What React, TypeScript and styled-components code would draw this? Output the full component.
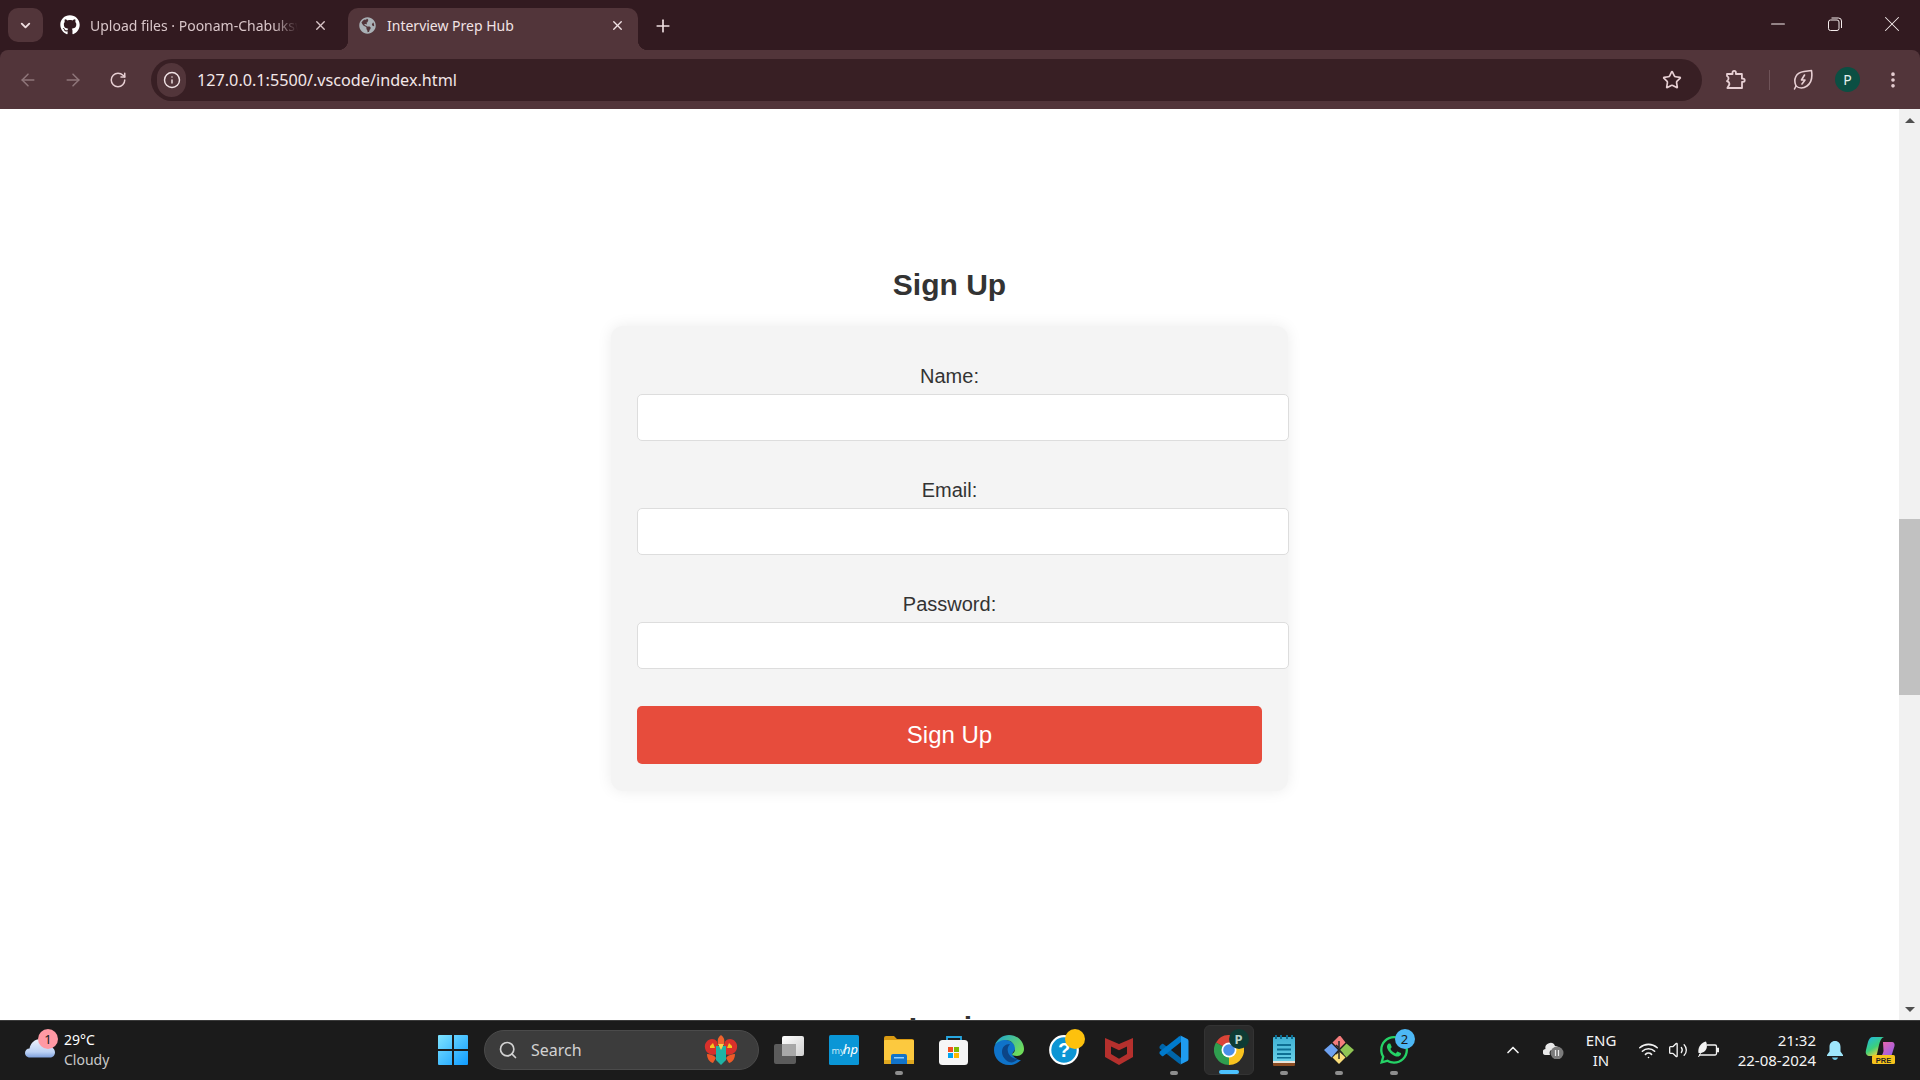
import React from "react";
import styled, { createGlobalStyle } from "styled-components";
import { ArrowLeft, ArrowRight, RotateCw, Info, Star, X, Plus, ChevronDown, ChevronUp, EllipsisVertical, Search, Wifi, Volume2, Minus } from "lucide-react";
import { FaGithub, FaGlobeAmericas, FaWhatsapp } from "react-icons/fa";

const Global = createGlobalStyle`
  html, body { margin: 0; padding: 0; height: 100%; overflow: hidden; background: #fff; }
`;

const Desktop = styled.div`
  width: 1920px; height: 1080px; display: flex; flex-direction: column; overflow: hidden;
  font-family: "Noto Sans", "Open Sans", sans-serif;
`;

/* ---------- browser chrome ---------- */
const TabStrip = styled.div`
  height: 50px; flex: none; background: #321a20; display: flex; align-items: flex-end; padding-left: 8px;
`;
const TabSearch = styled.button`
  width: 35px; height: 34px; margin-bottom: 8px; border: 0; padding: 0; border-radius: 10px; background: #52353a; color: #f0dfe1;
  display: flex; align-items: center; justify-content: center; flex: none;
`;
const Tab = styled.div<{ $active?: boolean }>`
  position: relative; height: 42px; flex: none; display: flex; align-items: center; box-sizing: border-box;
  width: 290px; padding-bottom: 8px;
  margin-left: ${p => (p.$active ? "8px" : "7px")};
  padding-left: ${p => (p.$active ? "11px" : "10px")};
  border-radius: 10px 10px 0 0;
  background: ${p => (p.$active ? "#52353a" : "transparent")};
  color: ${p => (p.$active ? "#f1e3e5" : "#d9c6c9")};
  ${p => p.$active && `
    &::before, &::after { content: ""; position: absolute; bottom: 0; width: 10px; height: 10px; }
    &::before { left: -10px; background: radial-gradient(circle at 0 0, transparent 10px, #52353a 10.5px); }
    &::after { right: -10px; background: radial-gradient(circle at 100% 0, transparent 10px, #52353a 10.5px); }
  `}
`;
const TabTitle = styled.span<{ $fade?: boolean }>`
  width: ${p => (p.$fade ? "208px" : "220px")}; margin-left: ${p => (p.$fade ? "10px" : "11px")}; font-size: 14px; white-space: nowrap; overflow: hidden;
  ${p => p.$fade && `-webkit-mask-image: linear-gradient(90deg, #000 88%, transparent 100%); mask-image: linear-gradient(90deg, #000 88%, transparent 100%);`}
`;
const TabClose = styled.span<{ $active?: boolean }>`
  margin-left: auto; margin-right: ${p => (p.$active ? "13px" : "12px")}; width: 16px; height: 16px; display: flex; align-items: center; justify-content: center;
`;
const NewTab = styled.span`
  margin: 0 0 14px 15px; width: 20px; height: 20px; color: #f0dfe1; display: flex; align-items: center; justify-content: center; align-self: flex-end;
`;
const WindowControls = styled.div`
  margin-left: auto; display: flex; align-self: flex-start;
`;
const WindowButton = styled.div`
  width: 57px; height: 48px; display: flex; align-items: center; justify-content: center; color: #f5ecec;
`;

const ToolWrap = styled.div`
  background: #321a20; flex: none;
`;
const Toolbar = styled.div`
  height: 59px; background: #52353a; border-radius: 8px 8px 0 0; display: flex; align-items: center; padding: 0 5px;
`;
const ToolButton = styled.div<{ $dim?: boolean }>`
  width: 45px; height: 42px; flex: none; display: flex; align-items: center; justify-content: center;
  color: ${p => (p.$dim ? "#8f767a" : "#e7cfd3")};
`;
const Omnibox = styled.div`
  flex: 1; height: 42px; margin: 0 11px; border-radius: 21px; background: #381f24; display: flex; align-items: center; padding: 0 5px 0 6px;
`;
const SiteChip = styled.div`
  width: 29px; height: 34px; border-radius: 17px; background: #52353a; color: #f1e3e5; display: flex; align-items: center; justify-content: center; flex: none;
`;
const UrlText = styled.span`
  margin-left: 11px; color: #f3e7e8; font-size: 16.2px; white-space: nowrap;
`;
const StarBox = styled.div`
  margin-left: auto; margin-right: 15px; color: #e7cfd3; display: flex;
`;
const Divider = styled.div`
  width: 1px; height: 20px; margin: 0 10px 0 11px; background: #6f5358; flex: none;
`;
const Avatar = styled.div`
  width: 25px; height: 25px; border-radius: 50%; background: #0b4f43; color: #e5f1ee; font-size: 14px; display: flex; align-items: center; justify-content: center;
`;

/* ---------- page ---------- */
const Viewport = styled.div`
  flex: 1; min-height: 0; display: flex; background: #fff; overflow: hidden;
`;
const Page = styled.main`
  flex: 1; min-width: 0; padding-top: 159px; display: flex; flex-direction: column; align-items: center;
  font-family: "Liberation Sans", Arial, sans-serif; color: #333;
`;
const Heading = styled.h2`
  margin: 0 0 24px; font-size: 30px; line-height: 34px; font-weight: 700; color: #333; text-align: center;
`;
const Card = styled.form`
  width: 625px; padding: 38px 26px 27px; background: #f4f4f4; border-radius: 12px; box-shadow: 0 0 15px rgba(0, 0, 0, 0.08);
  display: flex; flex-direction: column; gap: 37px;
`;
const Field = styled.div`
  display: flex; flex-direction: column; gap: 7px;
`;
const Label = styled.label`
  font-size: 20px; line-height: 22px; padding-top: 1px; text-align: center; color: #333;
`;
const Input = styled.input`
  display: block; box-sizing: content-box; width: 100%; height: 21px; padding: 12px 13px 12px 12px; border: 1px solid #ddd; border-radius: 5px; background: #fff; margin: 0;
  flex: none; outline: none;
`;
const Submit = styled.button`
  height: 58px; border: 0; padding: 0; border-radius: 5px; background: #e74c3c; color: #fff; font: 24px "Liberation Sans", Arial, sans-serif;
`;
const NextHeading = styled(Heading)`
  margin-top: 220px;
`;

const Scrollbar = styled.div`
  width: 21px; flex: none; background: #f1f1f1; display: flex; flex-direction: column; align-items: center;
`;
const ScrollArrow = styled.div<{ $down?: boolean }>`
  width: 0; height: 0; border-left: 5px solid transparent; border-right: 5px solid transparent;
  ${p => (p.$down ? "border-top: 5px solid #505050; margin-top: auto; margin-bottom: 8px;" : "border-bottom: 5px solid #505050; margin-top: 9px;")}
`;
const ScrollThumb = styled.div`
  width: 21px; height: 176px; margin-top: 396px; background: #c1c1c1;
`;

/* ---------- taskbar ---------- */
const Taskbar = styled.footer`
  height: 60px; flex: none; box-sizing: border-box; background: #1b1b1b; border-top: 1px solid #3b3b3b; padding-bottom: 1px; display: flex; align-items: center; color: #fff;
  position: relative; z-index: 2;
`;
const Weather = styled.div`
  width: 425px; flex: none; display: flex; align-items: center; padding-left: 25px; box-sizing: border-box;
`;
const WeatherIcon = styled.div`
  position: relative; width: 30px; height: 40px; display: flex; align-items: flex-end; padding-bottom: 12px; box-sizing: border-box;
`;
const Badge = styled.span<{ $bg: string; $size?: number; $top: number; $right: number }>`
  position: absolute; top: ${p => p.$top}px; right: ${p => p.$right}px; width: ${p => p.$size ?? 20}px; height: ${p => p.$size ?? 20}px; border-radius: 50%;
  background: ${p => p.$bg}; color: #1b1b1b; font-size: 13px; display: flex; align-items: center; justify-content: center;
`;
const WeatherText = styled.div`
  margin-left: 9px; font-size: 14px; line-height: 20px; margin-top: -1px;
`;
const WeatherSub = styled.div`
  color: #c9c9c9;
`;
const TaskSlot = styled.div`
  width: 55px; height: 58px; flex: none; display: flex; align-items: center; justify-content: center;
`;
const Tile = styled.div<{ $active?: boolean }>`
  position: relative; width: 50px; height: 50px; box-sizing: border-box; border-radius: 6px; display: flex; align-items: center; justify-content: center;
  background: ${p => (p.$active ? "#2b2b2b" : "transparent")};
  ${p => p.$active && "border: 1px solid #333;"}
`;
const Indicator = styled.span<{ $active?: boolean }>`
  position: absolute; left: 50%; bottom: 0; transform: translateX(-50%); height: 4px; border-radius: 2px;
  width: ${p => (p.$active ? "20px" : "8px")}; background: ${p => (p.$active ? "#4cc2ff" : "#8e8e8e")};
`;
const SearchPill = styled.div`
  width: 275px; height: 40px; flex: none; margin: 0 2px 0 4px; box-sizing: border-box; border-radius: 20px; background: #3c3c3c; border: 1px solid #4b4b4b;
  display: flex; align-items: center; padding: 0 19px 0 13px; color: #d2d2d2; font-size: 16px;
`;
const SearchWord = styled.span`
  margin-left: 13px;
`;
const Flower = styled.div`
  margin-left: auto; display: flex;
`;
const Tray = styled.div`
  margin-left: auto; padding-right: 14px; display: flex; align-items: center; height: 100%;
`;
const TrayItem = styled.div<{ $w: number }>`
  width: ${p => p.$w}px; flex: none; display: flex; align-items: center; justify-content: center;
`;
const Lang = styled(TrayItem)`
  flex-direction: column; font-size: 15px; line-height: 20px; color: #f4f4f4;
`;
const Clock = styled(TrayItem)`
  flex-direction: column; align-items: flex-end; font-size: 15px; line-height: 20px; color: #f4f4f4; white-space: nowrap;
`;

/* ---------- drawings ---------- */
const PuzzleIcon = () => (
  <svg width="21" height="21" viewBox="0 0 21 21" fill="none" stroke="currentColor" strokeWidth="1.8" strokeLinejoin="round">
    <path d="M2 5h5.500V3.600a1.700 1.700 0 0 1 3.400 0V5h6v4.600h1.200a1.600 1.600 0 0 1 0 3.200H17V19H2.400l1.800-3.200c.6-1.300-.2-3-1.600-3.300L2 12.200l1-1.200c1-1.400.5-3.300-1-4z" />
  </svg>
);
const LeafIcon = () => (
  <svg width="20" height="21" viewBox="0 0 20 21" fill="none" stroke="currentColor" strokeWidth="1.6" strokeLinecap="round" strokeLinejoin="round">
    <path d="M3 17C0 10 3 3.500 11 2.500L18.500 1.500C19.500 8 18.500 14 14 17 10.500 19.500 6 19.500 3 17z" />
    <path d="M1.500 20L3 17M11.500 6L8.500 11H12L9 15" />
  </svg>
);
const RestoreIcon = () => (
  <svg width="14" height="14" viewBox="0 0 14 14" fill="none" stroke="currentColor" strokeWidth="1">
    <rect x="0.500" y="3" width="10.500" height="10.500" rx="2" />
    <path d="M3.500 1h7a3 3 0 0 1 3 3v7" />
  </svg>
);
const CloudIcon = () => (
  <svg width="30" height="20" viewBox="0 0 30 20">
    <defs>
      <linearGradient id="cl" x1="0" y1="0" x2="0" y2="1"><stop offset="0" stopColor="#eef2fc" /><stop offset="0.7" stopColor="#bcd2f5" /><stop offset="1" stopColor="#7ea0dc" /></linearGradient>
    </defs>
    <path d="M5 19.500C1.500 19.500 0 17 0 15c0-2.500 2-4.500 4.500-4.500C5.500 5 10 1 15 1c4.500 0 8 3 9 7 3 .5 6 3 6 6.500 0 3-2.500 5-5 5z" fill="url(#cl)" />
  </svg>
);
const WindowsLogo = () => (
  <svg width="30" height="30" viewBox="0 0 30 30">
    <defs>
      <linearGradient id="win" x1="0" y1="0" x2="1" y2="1"><stop offset="0" stopColor="#7fe4ff" /><stop offset="1" stopColor="#0f9bff" /></linearGradient>
    </defs>
    <path d="M1 0h13v14H0V1a1 1 0 0 1 1-1zM16 0h13a1 1 0 0 1 1 1v13H16zM0 16h14v14H1a1 1 0 0 1-1-1zM16 16h14v13a1 1 0 0 1-1 1H16z" fill="url(#win)" />
  </svg>
);
const FlowerIcon = () => (
  <svg width="36" height="32" viewBox="0 0 36 32">
    <path d="M18 1c3 2 4 5 3 9h-6c-1-4 0-7 3-9z" fill="#f0622c" />
    <path d="M9 5c4 0 6 3 6 7v8c-6 2-12 0-13-6C1 9 5 5 9 5zM27 5c-4 0-6 3-6 7v8c6 2 12 0 13-6 1-5-3-9-7-9z" fill="#d9302b" />
    <path d="M7 12l3-3 2 5H7zM29 12l-3-3-2 5h5z" fill="#f7c51e" />
    <path d="M13 12h10v14l-5 5-5-5z" fill="#1fb4a5" />
    <path d="M15 10h6l-3 6z" fill="#f8d24a" />
    <path d="M4 20c3 0 7 1 9 4l-3 5c-4-1-6-5-6-9zM32 20c-3 0-7 1-9 4l3 5c4-1 6-5 6-9z" fill="#ee5a28" />
  </svg>
);
const TaskViewIcon = () => (
  <svg width="30" height="28" viewBox="0 0 30 28">
    <defs>
      <linearGradient id="tv" x1="0" y1="0" x2="1" y2="1"><stop offset="0" stopColor="#ffffff" /><stop offset="1" stopColor="#cfcfcf" /></linearGradient>
    </defs>
    <rect x="0" y="8" width="22" height="20" rx="2" fill="#5b5b5b" />
    <rect x="8" y="0" width="22" height="20" rx="2" fill="url(#tv)" />
    <rect x="8" y="8" width="14" height="12" fill="#a8a8a8" />
  </svg>
);
const MyHpIcon = () => (
  <svg width="30" height="30" viewBox="0 0 30 30">
    <rect width="30" height="30" rx="1.500" fill="#0a96d6" />
    <text x="2.500" y="19" fontFamily="Noto Sans, sans-serif" fontSize="9" fill="#cfeaf7">my</text>
    <text x="14" y="19" fontFamily="Noto Sans, sans-serif" fontStyle="italic" fontSize="13" fill="#ffffff">hp</text>
  </svg>
);
const FilesIcon = () => (
  <svg width="30" height="28" viewBox="0 0 30 28">
    <path d="M0 2a2 2 0 0 1 2-2h8l3 3h15a2 2 0 0 1 2 2v4H0z" fill="#d99a12" />
    <rect y="4" width="30" height="24" rx="1" fill="#fcc93f" />
    <path d="M0 24h30v3a1 1 0 0 1-1 1H1a1 1 0 0 1-1-1z" fill="#e0a81f" />
    <path d="M7 20a2 2 0 0 1 2-2h12a2 2 0 0 1 2 2v8H7z" fill="#1273c9" />
    <rect x="10" y="21" width="10" height="1.500" fill="#8fd0ff" />
  </svg>
);
const StoreIcon = () => (
  <svg width="30" height="30" viewBox="0 0 30 30">
    <path d="M8 6V2h14v4" fill="none" stroke="#27a7e0" strokeWidth="1.800" />
    <rect x="0" y="5" width="29" height="25" rx="3.500" fill="#f6f6f6" />
    <rect x="9" y="12" width="5" height="5" fill="#f25022" />
    <rect x="15" y="12" width="5" height="5" fill="#7fba00" />
    <rect x="9" y="18" width="5" height="5" fill="#00a4ef" />
    <rect x="15" y="18" width="5" height="5" fill="#ffb900" />
  </svg>
);
const EdgeIcon = () => (
  <svg width="30" height="30" viewBox="0 0 30 30">
    <defs>
      <linearGradient id="ed" x1="0" y1="0" x2="1" y2="0.600"><stop offset="0" stopColor="#1aa3d8" /><stop offset="1" stopColor="#6fdc5a" /></linearGradient>
    </defs>
    <path d="M0 15C0 7 6 4 12 5 16 5 20 8 22 13l-4 6c2 4 6 6 9 6-3 3-7 5-12 5C6 30 0 23 0 15z" fill="#0f73c9" />
    <path d="M8 17c0-5 3-8 8-8-2 2-3 5-2 8 1 4 5 7 10 7-3 3-6 4-9 3-4-2-7-6-7-10z" fill="#0c4587" />
    <path d="M1 10C3 4 9 0 15 0c9 0 15 7 15 14 0 4-3 7-7 7-3 0-5-1-5-2 2-1 3-3 3-5 0-5-4-9-9-9-5 0-9 2-11 5z" fill="url(#ed)" />
  </svg>
);
const HelpIcon = () => (
  <svg width="30" height="30" viewBox="0 0 30 30">
    <circle cx="15" cy="15" r="13.800" fill="#0d95d4" stroke="#ffffff" strokeWidth="2.200" />
    <text x="15" y="22" textAnchor="middle" fontFamily="Liberation Sans, sans-serif" fontWeight="700" fontSize="20" fill="#ffffff">?</text>
  </svg>
);
const McAfeeIcon = () => (
  <svg width="28" height="30" viewBox="0 0 28 30">
    <path fillRule="evenodd" d="M0 3l14 6 14-6v19l-14 8-14-8zM6 11.500v7.500l8 4.700 8-4.700v-7.500l-8 3.800z" fill="#b5302d" />
  </svg>
);
const VsCodeIcon = () => (
  <svg width="30" height="30" viewBox="0 0 30 30">
    <path d="M.8 11l2-2q.8-.6 1.600 0L22 23v5q-.5 1.500-2 .5L.8 13.500Q0 12 .8 11z" fill="#0065a9" />
    <path d="M.8 19l2 2q.8.600 1.600 0L22 7V2q-.5-1.500-2-.5L.8 16.500Q0 18 .8 19z" fill="#007acc" />
    <path d="M21 .3l7.400 3.700q1.100.5 1.100 2v18q0 1.500-1.100 2L21 29.700q1-.7 1-1.700V2q0-1-1-1.700z" fill="#1f9cf0" />
  </svg>
);
const ChromeIcon = () => (
  <svg width="30" height="30" viewBox="0 0 30 30">
    <path d="M15 15L2 7.500A15 15 0 0 1 28 7.500z" fill="#db4437" />
    <path d="M15 15L2 7.500A15 15 0 0 0 15 30z" fill="#2f9e4f" />
    <path d="M15 15L28 7.500A15 15 0 0 1 15 30z" fill="#f9c31f" />
    <circle cx="15" cy="15" r="7.500" fill="#fff" />
    <circle cx="15" cy="15" r="5.800" fill="#4a8fe8" />
  </svg>
);
const NotepadIcon = () => (
  <svg width="24" height="31" viewBox="0 0 24 31">
    <defs>
      <linearGradient id="np" x1="0" y1="0" x2="0" y2="1"><stop offset="0" stopColor="#3fb1d4" /><stop offset="1" stopColor="#6cd3ea" /></linearGradient>
    </defs>
    <rect x="1" y="2" width="22" height="27" rx="1" fill="url(#np)" />
    <path d="M1 26h22v4a1 1 0 0 1-1 1H2a1 1 0 0 1-1-1z" fill="#8a4b21" />
    <path d="M1 26h22v2H1z" fill="#e9e3d8" />
    <path d="M5 9h14v2H5zM5 13.500h14v2H5zM5 18h14v2H5zM5 22h14v1.500H5z" fill="#0d6f94" />
    <path d="M4 0v4M9 0v4M15 0v4M20 0v4" stroke="#0d6f94" strokeWidth="2" />
  </svg>
);
const GitIcon = () => (
  <svg width="30" height="30" viewBox="0 0 30 30">
    <path d="M15 14L8.500 7.500 15 1l1.500 0L21.500 7.500z" fill="#f47c7c" />
    <path d="M16 15l6.500-6.500L30 15l-7.500 7.500z" fill="#8fc454" />
    <path d="M15 16l6.500 6.500L15 29l-6.500-6.500z" fill="#f9dd7a" />
    <path d="M14 15L7.500 8.500 0 15l7.500 7.500z" fill="#6ea1f0" />
    <path d="M15 6v18M15 13l-3-3M15 15l4 4M12 19l3-3" stroke="#2a2a2a" strokeWidth="1.500" fill="none" />
  </svg>
);
const TrayCloud = () => (
  <svg width="21" height="18" viewBox="0 0 21 18">
    <path d="M3 14a3 3 0 0 1-.5-6A5 5 0 0 1 12 5a4 4 0 0 1 4 4H9c-2 0-3 2-2 5z" fill="#e8e8e8" />
    <circle cx="14" cy="12" r="6.500" fill="#7b7b7b" />
    <path d="M12.500 9v6M15.500 9v6" stroke="#e8e8e8" strokeWidth="1.200" />
  </svg>
);
const BatteryLeaf = () => (
  <svg width="21" height="18" viewBox="0 0 21 18" fill="none" stroke="#f2f2f2" strokeWidth="1.300">
    <path d="M9 4h8a1.500 1.500 0 0 1 1.500 1.500v7a1.500 1.500 0 0 1-1.500 1.500H1" />
    <path d="M19 7.500h1.500v3H19" fill="#f2f2f2" />
    <path d="M.5 12C-.5 6 3 2 8 .5 10 5 9 11 3 12z" fill="#f2f2f2" stroke="none" />
    <path d="M.5 16L3 11" strokeWidth="1" />
  </svg>
);
const BellIcon = () => (
  <svg width="16" height="19" viewBox="0 0 16 19">
    <path d="M8 0c3.500 0 5.500 2.500 5.500 6v4.500L16 14v1H0v-1l2.500-3.500V6C2.500 2.500 4.500 0 8 0z" fill="#9ee6fb" />
    <path d="M5 16.500h6c-.5 1.500-1.500 2.500-3 2.500s-2.500-1-3-2.500z" fill="#6fc9e6" />
  </svg>
);
const CopilotIcon = () => (
  <svg width="30" height="28" viewBox="0 0 30 28">
    <defs>
      <linearGradient id="co1" x1="0" y1="0" x2="0.600" y2="1"><stop offset="0" stopColor="#1fb6e8" /><stop offset="0.600" stopColor="#3ccf7a" /><stop offset="1" stopColor="#f6d33d" /></linearGradient>
      <linearGradient id="co2" x1="0" y1="0" x2="1" y2="1"><stop offset="0" stopColor="#f667a5" /><stop offset="1" stopColor="#8a5cf0" /></linearGradient>
    </defs>
    <path d="M8 1h11c-3 1-4 4-5 8l-2 9c-.5 1.500-2 2-3 2H5c-3 0-5-2-4-6l2-8C4 3 5 1 8 1z" fill="url(#co1)" />
    <path d="M18 6h9c2 0 3 2 2.500 4L27 18c-.5 2-2 3-4 3h-9c3-1 4-3 4.500-6z" fill="url(#co2)" />
    <rect x="7" y="19" width="23" height="9" rx="1.500" fill="#f6c31c" />
    <text x="18.500" y="26.500" textAnchor="middle" fontFamily="Liberation Sans, sans-serif" fontWeight="700" fontSize="7.500" fill="#222">PRE</text>
  </svg>
);

const ChromeBadgeLetter = styled.b`
  color: #b9d3ca;
`;

const taskApps: { key: string; icon: React.ReactNode; dot?: boolean; active?: boolean; badge?: React.ReactNode }[] = [
  { key: "view", icon: <TaskViewIcon /> },
  { key: "hp", icon: <MyHpIcon /> },
  { key: "files", icon: <FilesIcon />, dot: true },
  { key: "store", icon: <StoreIcon /> },
  { key: "edge", icon: <EdgeIcon /> },
  { key: "help", icon: <HelpIcon />, badge: <Badge $bg="#fdc10d" $top={4} $right={4} /> },
  { key: "mcafee", icon: <McAfeeIcon /> },
  { key: "code", icon: <VsCodeIcon />, dot: true },
  { key: "chrome", icon: <ChromeIcon />, dot: true, active: true, badge: <Badge $bg="#0e3b34" $top={3} $right={4}><ChromeBadgeLetter>P</ChromeBadgeLetter></Badge> },
  { key: "note", icon: <NotepadIcon />, dot: true },
  { key: "git", icon: <GitIcon />, dot: true },
  { key: "wa", icon: <FaWhatsapp size={32} color="#25d366" />, dot: true, badge: <Badge $bg="#4db8f5" $top={4} $right={4}>2</Badge> },
];

export default function App() {
  return (
    <Desktop>
      <Global />
      <TabStrip>
        <TabSearch><ChevronDown size={15} strokeWidth={3} /></TabSearch>
        <Tab>
          <FaGithub size={20} color="#fff" />
          <TabTitle $fade>Upload files · Poonam-Chabukswar</TabTitle>
          <TabClose><X size={15} strokeWidth={2.2} /></TabClose>
        </Tab>
        <Tab $active>
          <FaGlobeAmericas size={17} color="#aab1b6" />
          <TabTitle>Interview Prep Hub</TabTitle>
          <TabClose $active><X size={15} strokeWidth={2.2} /></TabClose>
        </Tab>
        <NewTab><Plus size={20} strokeWidth={2} /></NewTab>
        <WindowControls>
          <WindowButton><Minus size={22} strokeWidth={1.1} /></WindowButton>
          <WindowButton><RestoreIcon /></WindowButton>
          <WindowButton><X size={26} strokeWidth={0.95} /></WindowButton>
        </WindowControls>
      </TabStrip>
      <ToolWrap>
        <Toolbar>
          <ToolButton $dim><ArrowLeft size={20} strokeWidth={1.8} /></ToolButton>
          <ToolButton $dim><ArrowRight size={20} strokeWidth={1.8} /></ToolButton>
          <ToolButton><RotateCw size={18} strokeWidth={2} /></ToolButton>
          <Omnibox>
            <SiteChip><Info size={18} strokeWidth={1.9} /></SiteChip>
            <UrlText>127.0.0.1:5500/.vscode/index.html</UrlText>
            <StarBox><Star size={20} strokeWidth={2} /></StarBox>
          </Omnibox>
          <ToolButton><PuzzleIcon /></ToolButton>
          <Divider />
          <ToolButton><LeafIcon /></ToolButton>
          <ToolButton><Avatar>P</Avatar></ToolButton>
          <ToolButton><EllipsisVertical size={20} strokeWidth={2.4} /></ToolButton>
        </Toolbar>
      </ToolWrap>
      <Viewport>
        <Page>
          <Heading>Sign Up</Heading>
          <Card onSubmit={e => e.preventDefault()}>
            <Field><Label>Name:</Label><Input type="text" /></Field>
            <Field><Label>Email:</Label><Input type="email" /></Field>
            <Field><Label>Password:</Label><Input type="password" /></Field>
            <Submit type="submit">Sign Up</Submit>
          </Card>
          <NextHeading>Login</NextHeading>
        </Page>
        <Scrollbar>
          <ScrollArrow />
          <ScrollThumb />
          <ScrollArrow $down />
        </Scrollbar>
      </Viewport>
      <Taskbar>
        <Weather>
          <WeatherIcon>
            <CloudIcon />
            <Badge $bg="#ff99a4" $top={-1} $right={-3}>1</Badge>
          </WeatherIcon>
          <WeatherText>29°C<WeatherSub>Cloudy</WeatherSub></WeatherText>
        </Weather>
        <TaskSlot><WindowsLogo /></TaskSlot>
        <SearchPill>
          <Search size={20} strokeWidth={2} />
          <SearchWord>Search</SearchWord>
          <Flower><FlowerIcon /></Flower>
        </SearchPill>
        {taskApps.map(app => (
          <TaskSlot key={app.key}>
            <Tile $active={app.active}>
              {app.icon}
              {app.badge}
              {app.dot && <Indicator $active={app.active} />}
            </Tile>
          </TaskSlot>
        ))}
        <Tray>
          <TrayItem $w={40}><ChevronUp size={20} strokeWidth={2} color="#f2f2f2" /></TrayItem>
          <TrayItem $w={40}><TrayCloud /></TrayItem>
          <Lang $w={56}><span>ENG</span><span>IN</span></Lang>
          <TrayItem $w={38}><Wifi size={21} strokeWidth={1.8} color="#f2f2f2" /></TrayItem>
          <TrayItem $w={22}><Volume2 size={20} strokeWidth={1.6} color="#f2f2f2" /></TrayItem>
          <TrayItem $w={38}><BatteryLeaf /></TrayItem>
          <Clock $w={89}><span>21:32</span><span>22-08-2024</span></Clock>
          <TrayItem $w={38}><BellIcon /></TrayItem>
          <TrayItem $w={52}><CopilotIcon /></TrayItem>
        </Tray>
      </Taskbar>
    </Desktop>
  );
}
